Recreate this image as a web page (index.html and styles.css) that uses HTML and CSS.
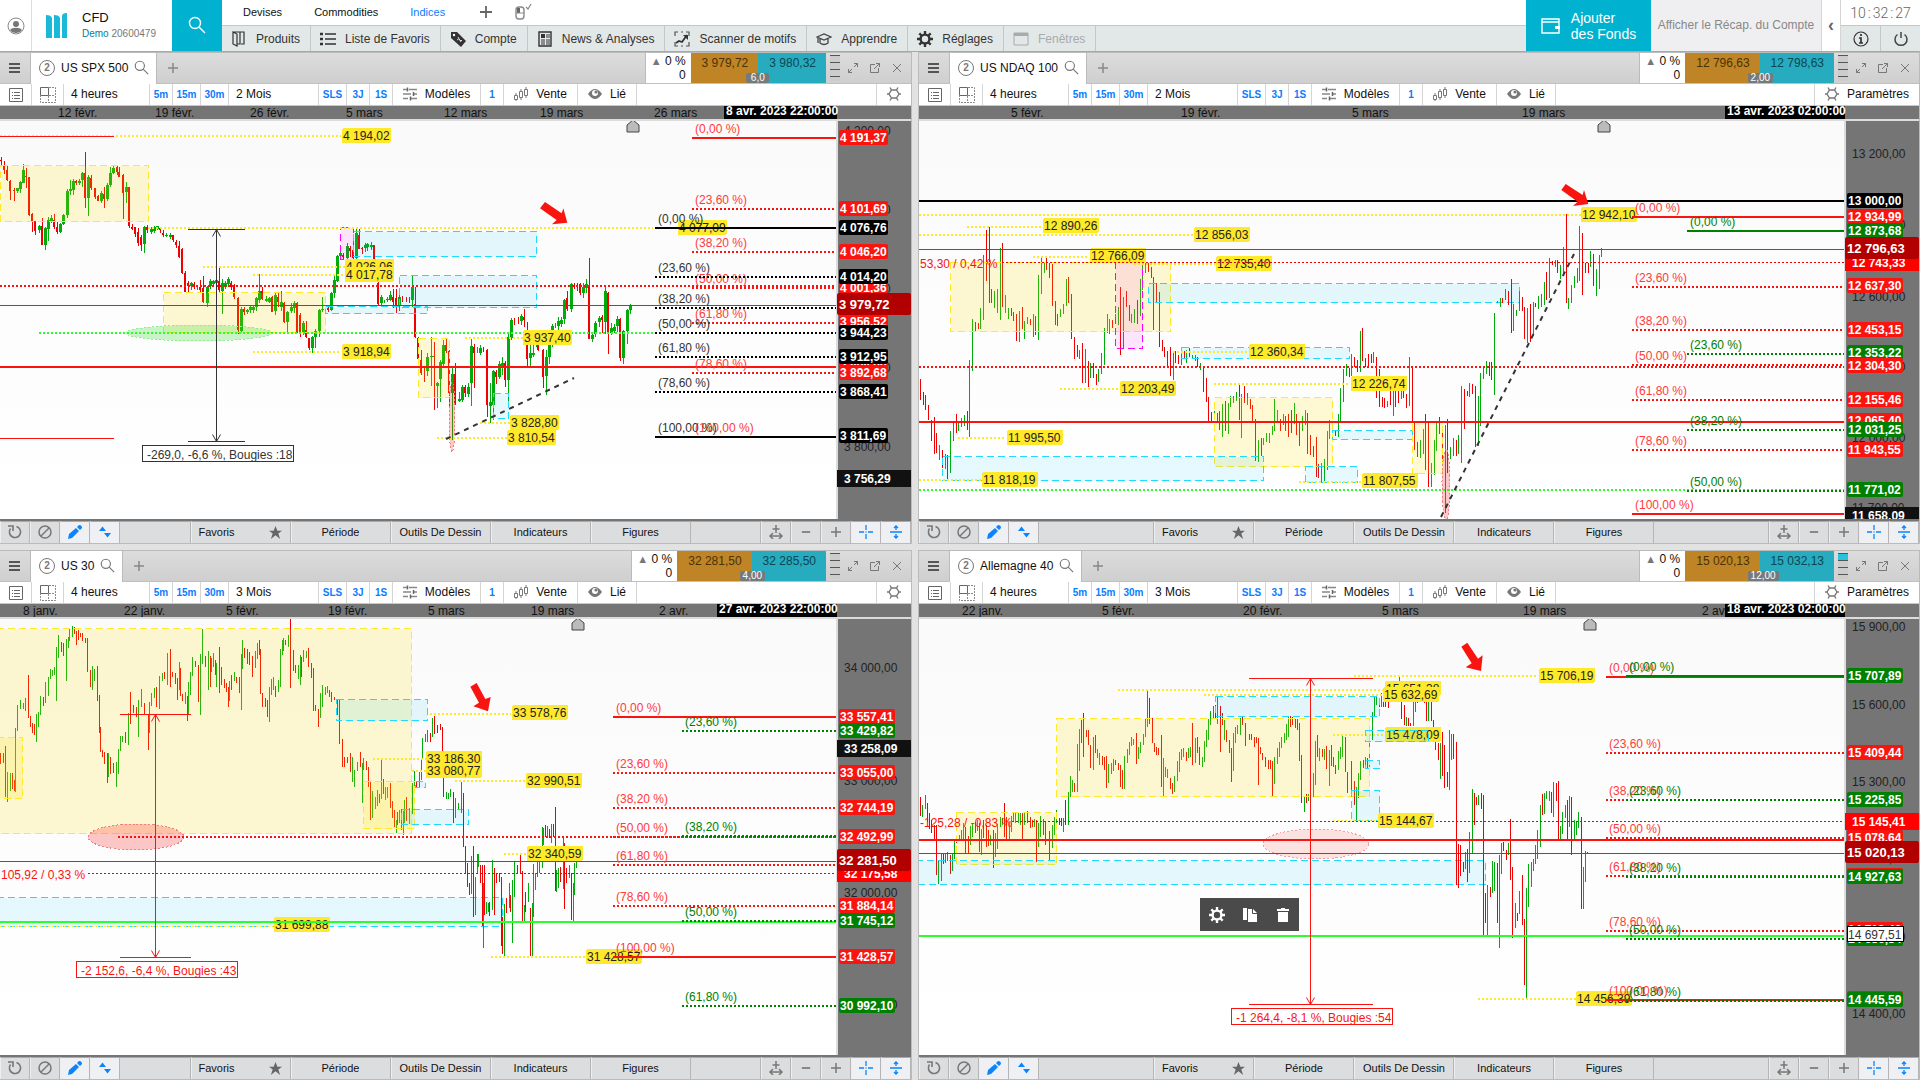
FILE: index.html
```html
<!DOCTYPE html>
<html lang="fr">
<head>
<meta charset="utf-8">
<title>CFD – Demo</title>
<link rel="stylesheet" href="styles.css">
</head>
<body>
<svg class="sprite" aria-hidden="true">
  <symbol id="i-user" viewBox="0 0 18 18"><circle cx="9" cy="9" r="8" fill="none" stroke="#8a8a8a"/><circle cx="9" cy="7" r="3" fill="#777"/><path d="M3 13c2-3 10-3 12 0-2 4-10 4-12 0z" fill="#777"/></symbol>
  <symbol id="i-logo" viewBox="0 0 22 26"><path d="M0 2q5 0 6 3v20H0zM8 2q5 0 6 3v20H8zM16 3q0-3 5-3v25h-5z" fill="#1ab9d8"/></symbol>
  <symbol id="i-search" viewBox="0 0 18 18"><circle cx="7" cy="7" r="5.5" fill="none" stroke="currentColor" stroke-width="1.4"/><path d="M11 11l6 6" stroke="currentColor" stroke-width="1.4"/></symbol>
  <symbol id="i-plus" viewBox="0 0 12 12"><path d="M6 0v12M0 6h12" stroke="currentColor" stroke-width="1.8"/></symbol>
  <symbol id="i-minus" viewBox="0 0 12 12"><path d="M1 6h10" stroke="currentColor" stroke-width="2"/></symbol>
  <symbol id="i-mouse" viewBox="0 0 18 18"><rect x="2" y="4" width="8" height="12" rx="3" fill="none" stroke="#888" stroke-width="1.4"/><path d="M3 5h3v5H3z" fill="#666"/><path d="M2 10h8" stroke="#888"/><path d="M12 4l2 2 3-5" fill="none" stroke="#888" stroke-width="1.2"/></symbol>
  <symbol id="i-products" viewBox="0 0 16 16"><path d="M2 1l4 2v12l-4-2zM2 1h7v12H6M9 1h4v12h-3" fill="none" stroke="#333" stroke-width="1.2"/></symbol>
  <symbol id="i-bullets" viewBox="0 0 16 14"><path d="M0 2h3M0 7h3M0 12h3" stroke="#333" stroke-width="2.6"/><path d="M5 2h11M5 7h11M5 12h11" stroke="#333" stroke-width="1.4"/></symbol>
  <symbol id="i-tag" viewBox="0 0 16 16"><path d="M1 1l6 0 9 9-5 6-10-9z" fill="#333"/><circle cx="4" cy="4" r="1.2" fill="#fff"/><path d="M8 6l3 5M7 9q2-2 3 0t2 0" stroke="#ddd" fill="none"/></symbol>
  <symbol id="i-news" viewBox="0 0 14 16"><path d="M1 1h12v14H1z" fill="none" stroke="#333" stroke-width="1.4"/><path d="M3 3h4v4H3z" fill="#333"/><path d="M8 4h4M8 6h4M3 9h4M8 9h4M3 11h4M8 11h4M3 13h4M8 13h4" stroke="#333"/></symbol>
  <symbol id="i-scan" viewBox="0 0 16 16"><path d="M1 5V1h3M12 1h3v4M15 11v4h-3M4 15H1v-4M7 1h2M7 15h2" fill="none" stroke="#555" stroke-width="1.2"/><path d="M2 12l3-2 3 1 5-7" fill="none" stroke="#333" stroke-width="1.8"/><path d="M9 4h5v5z" fill="#333"/></symbol>
  <symbol id="i-cap" viewBox="0 0 16 14"><path d="M1 5l7-3 7 3-7 3zM4 7v4q4 3 8 0V7M2 6v5" fill="none" stroke="#444" stroke-width="1.3"/></symbol>
  <symbol id="i-cog" viewBox="0 0 16 16"><circle cx="8" cy="8" r="4.4" fill="none" stroke="currentColor" stroke-width="2.4"/><path d="M8 0v3M8 13v3M0 8h3M13 8h3M2.300 2.300l2.200 2.200M11.500 11.500l2.200 2.200M13.700 2.300l-2.200 2.200M4.500 11.500l-2.200 2.200" stroke="currentColor" stroke-width="2.400"/></symbol>
  <symbol id="i-window" viewBox="0 0 16 14"><path d="M1 1h14v12H1z" fill="none" stroke="#aaa"/><path d="M1 1h14v3H1z" fill="#aaa"/></symbol>
  <symbol id="i-wallet" viewBox="0 0 20 16"><path d="M1 1h17v14H1zM1 4h17" fill="none" stroke="#fff" stroke-width="1.4"/><path d="M14 8h5v3h-5z" fill="#fff"/></symbol>
  <symbol id="i-info" viewBox="0 0 16 16"><circle cx="8" cy="8" r="7" fill="none" stroke="#333" stroke-width="1.2"/><path d="M8 3v2M6 7h2v5M6 12h4" fill="none" stroke="#333" stroke-width="1.7"/></symbol>
  <symbol id="i-power" viewBox="0 0 16 16"><path d="M4.500 3.500a6 6 0 1 0 7 0M8 1v6" fill="none" stroke="#444" stroke-width="1.5"/></symbol>
  <symbol id="i-menu" viewBox="0 0 12 12"><path d="M0 2h11M0 6h11M0 10h11" stroke="#555" stroke-width="2"/></symbol>
  <symbol id="i-list" viewBox="0 0 14 14"><path d="M.500.500h13v13H.500z" fill="none" stroke="#666"/><path d="M5 4.500h6M5 7.500h6M5 10.500h6M3 4.500h1M3 7.500h1M3 10.500h1" stroke="#666"/></symbol>
  <symbol id="i-grid" viewBox="0 0 16 16"><path d="M.500.500h8v8h-8z" fill="none" stroke="#666"/><path d="M9 .500h6.500v15H.500V9M8.500 9v6M9 8.500h6" fill="none" stroke="#888" stroke-dasharray="2 1"/></symbol>
  <symbol id="i-sliders" viewBox="0 0 14 14"><path d="M0 2.500h4M6 2.500h8M0 7h8M11 7h3M0 11.500h5M8 11.500h6" stroke="#888" stroke-width="1.300"/><path d="M4.500 .500v4M10.500 5v4M7.500 9.500v4" stroke="#666" stroke-width="1.500"/></symbol>
  <symbol id="i-candles" viewBox="0 0 14 14"><path d="M.500 8.500h3v4h-3zM5.500 4.500h3v6h-3zM10.500 2.500h3v6h-3zM2 6v2M2 13v1M7 2v2M7 11v2M12 0v2M12 9v2" fill="none" stroke="#777"/></symbol>
  <symbol id="i-eye" viewBox="0 0 14 12"><path d="M0 6q7-10 14 0-7 10-14 0z" fill="#777"/><circle cx="7" cy="5" r="3" fill="#fff"/><circle cx="8" cy="4" r="1.6" fill="#777"/></symbol>
  <symbol id="i-gear" viewBox="0 0 14 14"><path d="M4.500 3h5L12 7l-2.500 4h-5L2 7zM4.500 3L3 .500M9.500 3L11 .500M4.500 11L3 13.500M9.500 11l1.500 2.500M0 7h2M12 7h2" fill="none" stroke="#777" stroke-width="1.400"/></symbol>
  <symbol id="i-expand" viewBox="0 0 10 10"><path d="M6 .500h3.500V4M9.500.500L6 4M.500 6v3.500H4M.500 9.500L4 6" fill="none" stroke="#777"/></symbol>
  <symbol id="i-popout" viewBox="0 0 10 10"><path d="M5 1.500H.500v8h8V5M6 .500h3.500V4M9.500.500L4 6" fill="none" stroke="#777"/></symbol>
  <symbol id="i-close" viewBox="0 0 10 10"><path d="M1 1l8 8M9 1L1 9" stroke="#777"/></symbol>
  <symbol id="i-refresh" viewBox="0 0 14 14"><path d="M2.500 3.500a5.600 5.600 0 1 0 6-2M0 1h5v5" fill="none" stroke="#777" stroke-width="1.600"/></symbol>
  <symbol id="i-forbid" viewBox="0 0 14 14"><circle cx="7" cy="7" r="6" fill="none" stroke="#777" stroke-width="1.500"/><path d="M3 11l8-8" stroke="#777" stroke-width="1.500"/></symbol>
  <symbol id="i-pencil" viewBox="0 0 14 14"><path d="M0 14l1-5 7-6 3 3-7 7zM9 2l2-2q3 0 3 3l-2 2z" fill="#0a84ff"/></symbol>
  <symbol id="i-updown" viewBox="0 0 12 12"><path d="M0 5l3.500-4.500L7 5zM5 7h7l-3.500 4.500z" fill="#0a84ff"/></symbol>
  <symbol id="i-star" viewBox="0 0 14 14"><path d="M7 0l2 5h5l-4 3 2 6-5-4-5 4 2-6-4-3h5z" fill="#666"/></symbol>
  <symbol id="i-fit" viewBox="0 0 14 14"><path d="M7 0v8M3.500 4h7M1 11h12M4 8l-3 3 3 3M10 8l3 3-3 3" fill="none" stroke="#777" stroke-width="1.500"/></symbol>
  <symbol id="i-cross" viewBox="0 0 14 14"><path d="M7 0v5M7 9v5M0 7h5M9 7h5M6.500 7h1" stroke="#0a84ff" stroke-width="1.300"/></symbol>
  <symbol id="i-split" viewBox="0 0 14 14"><path d="M1 7h12M7 1v4M7 9v4M5 3l2-2 2 2M5 11l2 2 2-2" fill="none" stroke="#0a84ff" stroke-width="1.300"/></symbol>
  <symbol id="i-copy" viewBox="0 0 14 14"><path d="M0 0h4v12H0zM5 1h5l4 4v9H5z" fill="#fff"/><path d="M9.500 1v4.500H14" fill="none" stroke="#4a4a4a"/></symbol>
  <symbol id="i-trash" viewBox="0 0 12 14"><path d="M4 0h4v1h4v2H0V1h4zM1 4h10v10H1z" fill="#fff"/></symbol>
</svg>

<header class="top">
  <button class="top-user" aria-label="Profil"><svg width="18" height="18"><use href="#i-user"/></svg></button>
  <div class="account">
    <svg width="22" height="26"><use href="#i-logo"/></svg>
    <div><div class="account-type">CFD</div><div class="account-id"><b>Demo</b> 20600479</div></div>
  </div>
  <button class="top-search" aria-label="Rechercher"><svg width="18" height="18"><use href="#i-search"/></svg></button>
  <div class="top-main">
    <nav class="markets">
      <a href="#">Devises</a><a href="#">Commodities</a><a href="#" class="on">Indices</a>
      <button class="add" aria-label="Ajouter"><svg width="12" height="12"><use href="#i-plus"/></svg></button>
      <button class="mouse" aria-label="Souris"><svg width="18" height="18"><use href="#i-mouse"/></svg></button>
    </nav>
    <nav class="menu">
      <button><span><svg width="16" height="16"><use href="#i-products"/></svg></span>Produits</button>
      <button><span><svg width="16" height="14"><use href="#i-bullets"/></svg></span>Liste de Favoris</button>
      <button><span><svg width="16" height="16"><use href="#i-tag"/></svg></span>Compte</button>
      <button><span><svg width="14" height="16"><use href="#i-news"/></svg></span>News &amp; Analyses</button>
      <button><span><svg width="16" height="16"><use href="#i-scan"/></svg></span>Scanner de motifs</button>
      <button><span><svg width="16" height="14"><use href="#i-cap"/></svg></span>Apprendre</button>
      <button><span><svg width="16" height="16"><use href="#i-cog"/></svg></span>Réglages</button>
      <button disabled><span><svg width="16" height="14"><use href="#i-window"/></svg></span>Fenêtres</button>
    </nav>
  </div>
  <button class="funds"><svg width="20" height="16"><use href="#i-wallet"/></svg><span>Ajouter<br>des Fonds</span></button>
  <button class="recap">Afficher le Récap. du Compte</button>
  <button class="fold" aria-label="Replier">‹</button>
  <div class="side">
    <div class="clock"><span>10</span><span>:</span><span>32</span><span>:</span><span>27</span></div>
    <div class="side-row">
      <button aria-label="Informations"><svg width="16" height="16"><use href="#i-info"/></svg></button>
      <button aria-label="Quitter"><svg width="16" height="16"><use href="#i-power"/></svg></button>
    </div>
  </div>
</header>
<main class="panels" id="panels"></main>
<script src="chart.js"></script>
</body>
</html>
```
FILE: styles.css
```css
* { box-sizing: border-box; }
html, body { height: 100%; }
body {
  margin: 0;
  display: flex;
  flex-direction: column;
  background: #e2e2e2;
  color: #111;
  font: 12px/16px "Liberation Sans", Arial, sans-serif;
  overflow: hidden;
}
button {
  margin: 0;
  padding: 0;
  border: 0;
  background: none;
  color: inherit;
  font: inherit;
  display: flex;
  align-items: center;
  justify-content: center;
  white-space: nowrap;
}
svg { display: block; flex: none; }
.sprite { position: absolute; width: 0; height: 0; }

/* top bar */
.top { display: flex; height: 52px; flex: none; background: #fff; border-bottom: 1px solid #a3a7bb; }
.top-user { width: 32px; border-right: 1px solid #ddd; }
.account { width: 140px; display: flex; align-items: center; gap: 14px; padding-left: 14px; }
.account-type { font-size: 13px; }
.account-id { font-size: 10px; color: #777; }
.account-id b { font-weight: normal; color: #067c93; }
.top-search { width: 50px; padding-bottom: 2px; background: #00b2cf; color: #fff; }
.top-main { flex: 1; min-width: 0; display: flex; flex-direction: column; }
.markets { height: 25px; display: flex; align-items: center; padding: 0 0 2px 5px; font-size: 11px; }
.markets a { padding: 0 16px; color: #111; text-decoration: none; }
.markets a.on { color: #0a7cff; }
.add { width: 50px; color: #666; }
.mouse { width: 24px; }
.menu { flex: 1; display: flex; background: #e2e8e8; border-top: 1px solid #c2c8c8; }
.menu button { padding-right: 10px; border-right: 1px solid #c2c8c8; color: #333; }
.menu button:disabled { color: #aaa; }
.menu span { width: 34px; display: flex; justify-content: center; }
.funds { width: 125px; gap: 10px; background: #00b2cf; color: #fff; font-size: 14px; text-align: left; }
.recap { width: 171px; padding-bottom: 2px; background: #efeff1; color: #888; border-right: 1px solid #d5d5d5; }
.fold { width: 18px; padding-bottom: 2px; font-size: 18px; font-weight: bold; color: #666; }
.side { width: 80px; display: flex; flex-direction: column; border-left: 1px solid #d5d5d5; }
.clock { height: 25px; display: flex; align-items: center; justify-content: center; gap: 2px; color: #666; font: 300 14px/16px Roboto, sans-serif; }
.side-row { flex: 1; display: flex; border-top: 1px solid #c2c8c8; background: #e2e8e8; }
.side-row button { flex: 1; }
.side-row button + button { border-left: 1px solid #c2c8c8; }

/* chart windows */
.panels {
  flex: 1;
  min-height: 0;
  display: grid;
  grid-template-columns: 912fr 1002fr;
  grid-template-rows: minmax(0, 492fr) minmax(0, 530fr);
  gap: 6px;
}
.panel { min-width: 0; min-height: 0; display: flex; flex-direction: column; border: 1px solid #bbb; }
.panel:nth-child(odd) { border-left: 0; }

.tabs { height: 31px; flex: none; display: flex; background: linear-gradient(#dcdcdc, #cfcfcf); border-bottom: 1px solid #c0c0c0; }
.tabs-menu { width: 31px; border-right: 1px solid #bbb; }
.tab { height: 31px; display: flex; align-items: center; gap: 6px; padding: 0 7px 2px 8px; background: #fff; border-right: 1px solid #bbb; color: #777; }
.tab strong { color: #111; font-weight: normal; }
.tab i { width: 16px; height: 16px; border: 1px solid #777; border-radius: 8px; font: bold 10px/14px "Liberation Sans", sans-serif; text-align: center; }
.tab-add { width: 32px; color: #888; }
.move { margin-left: auto; width: 46px; padding: 1px 5px 0 0; background: #fff; border-left: 1px solid #bbb; text-align: right; line-height: 14px; }
.move b { color: #777; font-weight: normal; font-size: 11px; }
.quote { display: flex; position: relative; }
.quote button { padding: 0 10px 0 11px; align-items: flex-start; line-height: 21px; }
.quote .sell { background: #bf8425; color: #4a3208; }
.quote .buy { background: #27abbf; color: #0d4650; }
.spread { position: absolute; left: 50%; bottom: 0; min-width: 23px; margin-left: -12px; padding: 0 3px; background: #757a7c; color: #fff; font-size: 10px; line-height: 10px; text-align: center; border-radius: 2px; }
.depth { width: 10px; margin: 2px 2px 2px 4px; background: repeating-linear-gradient(#555 0 1px, #ccc 1px 7px); }
.depth.hot { background: linear-gradient(#27c3dd, #27c3dd) 0 1px / 10px 6px no-repeat, repeating-linear-gradient(#555 0 1px, #ccc 1px 7px); }
.win { width: 22px; }
.win:last-child { margin-right: 3px; }

.tools { height: 22px; flex: none; display: flex; background: #fff; border-bottom: 1px solid #c8c8c8; }
.tools button { border-right: 1px solid #d5d5d5; gap: 8px; padding-bottom: 2px; }
.tools .icon { width: 32px; padding-bottom: 0; }
.tools .period { width: 86px; justify-content: flex-start; padding-left: 7px; }
.tools .span { width: 90px; justify-content: flex-start; padding-left: 7px; }
.tools .quick { width: 23px; color: #0a7cff; font-size: 10px; font-weight: bold; padding-bottom: 0; }
.tools .wide { width: 28px; }
.tools .model { width: 88px; }
.tools .side-btn { width: 74px; }
.tools .link { width: 59px; }
.tools .prefs { margin-left: auto; padding: 0 10px 2px; border-left: 1px solid #d5d5d5; border-right: 0; }

.times { width: 100%; height: 13px; flex: none; background: #757575; }
.chart { flex: 1; min-height: 0; display: flex; position: relative; border-top: 2px solid #dcdcdc; }
.plot { flex: 1; min-width: 0; height: 100%; background: linear-gradient(#fafafa, #fff); }
.axis { width: 75px; height: 100%; background: #757575; }
svg text { font: 12px "Liberation Sans", Arial, sans-serif; white-space: pre; }
svg text.strong { font-weight: bold; }
svg text.now { font-size: 13px; font-weight: bold; }

.float { position: absolute; left: 281px; top: 279px; width: 99px; height: 33px; display: flex; background: #4a4a4a; color: #fff; }
.float button { flex: 1; }

.foot { height: 24px; flex: none; display: flex; background: #dcddde; border-top: 2px solid #757575; font-size: 11px; }
.foot button { width: 100px; padding-bottom: 1px; border-right: 1px solid #b5b5b5; border-left: 1px solid #eee; border-top: 1px solid #aaa; }
.foot .mini { width: 30px; color: #777; }
.foot .on { background: #eef0f3; }
.foot .gap { flex: 1; border-top: 1px solid #aaa; border-right: 1px solid #b5b5b5; }
.foot .fav { justify-content: space-between; padding: 0 8px 1px 7px; }
```
FILE: chart.js
```js
// Chart windows. Geometry is stored in thirds of a pixel; "x0" is the pixel offset of each block of drawings.
const RED = '#fa1410', GREEN = '#008000', BLACK = '#000', YEL = '#ffe92b', LIME = '#2bff2b', CUR = '#b20000';
const U = 3;

const charts = [
  {
    name: 'US SPX 500', span: '2 Mois', sell: '3 979,72', buy: '3 980,32', spread: '6,0', dy: -1, prefs: '',
    times: [[58, '12 févr.'], [155, '19 févr.'], [250, '26 févr.'], [346, '5 mars'], [444, '12 mars'], [540, '19 mars'], [654, '26 mars']],
    stamp: [724, 113, '8 avr. 2023 22:00:00'],
    blocks: [
      {
        x0: 0,
        bars: 'r4,112,135,120,124 r13,124,162,135,150 r21,135,182,150,180 r30,180,240,183,213 r43,205,242,211,215 g52,203,220,205,215 g61,183,218,187,208 g70,133,190,150,188 r79,143,204,168,172 r88,170,288,170,285 r97,278,335,282,304 r106,302,345,304,335 g119,315,338,318,330 r128,293,376,318,375 g137,320,390,324,374 g146,292,362,300,326 g155,285,310,295,303 r163,281,326,300,320 r173,305,342,320,336 g182,310,340,312,336 g191,283,315,284,312 g202,207,294,213,286 g211,180,225,207,213 g220,178,225,183,210 r229,180,196,184,190 g238,178,196,182,188 g247,156,200,160,182 r256,96,265,160,236 g265,165,288,172,236 r274,166,210,175,205 r285,203,236,205,232 r295,224,244,228,242 g304,214,250,220,243 r313,200,264,222,238 g322,190,242,195,238 g331,140,200,158,194 g340,137,162,144,158 r352,138,165,142,156 r358,140,172,155,170 r370,162,297,165,218 g379,185,250,200,216 r387,200,325,202,320 r396,312,330,320,325 r405,322,350,322,344 r414,324,378,336,370 r424,345,392,350,374 g433,318,398,322,374 r443,314,340,322,330 g455,320,342,326,336 g463,318,340,320,332 g473,317,330,318,326 r481,320,340,324,330 r491,330,350,340,346 g500,340,352,346,348 g510,340,358,345,350 r519,344,365,346,362 r528,360,384,366,376 r538,362,415,378,410 r547,384,462,388,460 r556,454,517,458,515 r566,484,515,490,500 g575,485,510,490,500 r584,486,506,492,500 g592,500,510 r602,480,520,500,510 r611,468,550,505,548 g622,497,562,500,548 g631,478,508,483,498 g641,480,494,482,490 g650,477,490,480,488 r659,444,515,484,512 g668,478,582,490,514 g677,484,506,488,500 g686,472,497,476,490 r695,482,510,488,500 r704,492,536,497,530 r715,530,642,535,630 g724,560,635,566,632 r733,560,585,568,578 g742,566,583,570,576 g751,558,578,562,572 g760,556,580,560,570 g769,530,572,534,562 g778,463,548,512,538 r788,500,540,512,535 g799,528,546,538,544 g808,530,548,534,545 r817,528,576,530,574 g826,520,586,525,574 r835,515,560,530,545 g844,514,572,545,560 r853,546,608,550,606 g862,572,640,575,606 g873,550,580,560,572 g882,542,578,548,562 r891,545,640,548,636 r901,580,650,585,638 g910,603,646,610,640 r919,602,655,630,650 r928,654,690,655,686 g937,648,700,652,685 g947,627,685,632,650 g958,567,650,570,632 g967,532,575,566,570 g976,560,576 r985,560,575,565,572 g995,516,574,520,572 g1003,468,535,480,520 g1012,405,485,408,482 g1021,392,415,398,408 r1030,400,416,404,410 g1042,370,420,378,414 r1051,378,412,385,395 r1060,360,425,390,415 g1069,326,420,338,412 r1078,328,388,345,386 r1088,380,402,384,388 g1097,368,395,374,384 g1103,368,392,372,380 g1113,365,390,374,380 r1124,375,470,376,468 r1134,480,555,488,550 g1145,525,555,532,550 g1153,540,550 g1163,530,545,538,542 g1172,514,542,525,540 r1181,508,565,530,545 r1189,508,580,535,558 g1198,525,574,530,555 r1207,528,545 r1218,530,545 r1227,532,548 g1238,468,560,500,540 r1246,500,655,552,652 r1255,650,720,655,718 r1263,690,765,720,758 r1274,742,785 g1283,700,768,712,755 g1294,652,798,708,712 r1303,665,870,708,710 g1312,786,864,790,798 g1321,720,845,726,778 g1330,660,740,675,732 r1340,654,700,675,694 r1348,690,860,694,820 g1358,745,960,762,820 r1366,730,855,762,850 g1377,815,845,838,845',
        boxes: [['y', 0, 136, 443, 304], ['y', 490, 517, 977, 637], ['y', 1255, 655, 1349, 832], ['p', 1021, 322, 1061, 418], ['c', 1061, 334, 1610, 409], ['c', 1198, 466, 1610, 562], ['c', 977, 559, 1282, 580]],
        ovals: [['g', 598, 640, 219, 23], ['r', 1355, 890, 10, 105]],
        lines: [[0, 1023, 48, YEL, 2, 1], [443, 1960, 324, YEL, 2, 1], [610, 1035, 440, YEL, 2, 1], [760, 1030, 465, YEL, 2, 1], [760, 1023, 695, YEL, 2, 1], [1310, 1522, 955, YEL, 2, 1], [0, 342, 49, RED, 1], [0, 342, 955, RED, 1], [0, 2508, 498, RED, 2, 1], [0, 2508, 556, RED, 1], [117, 1960, 639, LIME, 2, 1], [0, 2508, 741, RED, 2]],
        labels: [[1026, 44, '4 194,02'], [1035, 437, '4 026,06'], [1035, 462, '4 017,78'], [1026, 692, '3 918,94']],
        measure: [649, 328, 964, 564, 735, 427, 881, '-269,0, -6,6 %, Bougies :18', '#333'],
        trend: [1338, 958, 1722, 773]
      },
      {
        x0: 460,
        bars: 'g7,796,845,800,838 r16,796,830,802,820 g26,790,832,800,820 g35,658,858,678,788 r44,672,805,680,698 g53,682,698 g61,676,706,684,698 r70,682,695 r81,688,890,690,856 g91,790,908,846,858 g100,750,900,754,855 r109,750,792,756,772 g118,724,776,732,770 g127,712,765,730,742 r136,724,802,730,780 g146,642,858,652,780 g155,594,660,600,654 r164,594,615 r175,592,612 g184,582,616,588,602 r194,568,620,590,600 r202,606,738,650,716 g211,670,738,700,716 g220,670,712,698,704 g229,665,680 r236,662,692,668,690 r249,688,804,690,770 g259,690,825,710,768 g268,640,732,652,712 g277,612,680,618,650 g286,610,625 g295,592,632,604,618 g304,592,620,600,612 g313,536,612,540,598 r322,514,572,534,568 g334,488,575,492,568 r343,488,506 r352,490,512 r361,490,526,492,520 g370,490,533,502,520 g379,477,520,492,504 r388,414,658,500,656 g397,640,665,644,656 g406,604,650,610,642 g418,588,620,594,606 r427,584,640,590,600 g436,500,642,512,606 r445,515,702,520,636 g455,610,645,624,638 g463,612,640,620,632 g473,588,636,598,620 r481,595,722,598,716 g490,630,732,634,716 g502,566,672,570,634 g511,552,582,556,570',
        boxes: [['c', 100, 821, 146, 896]],
        lines: [[15, 190, 654, YEL, 2, 1], [60, 150, 909, YEL, 2, 1]],
        labels: [[655, 320, '4 077,09'], [190, 650, '3 937,40'], [150, 905, '3 828,80'], [142, 950, '3 810,54']],
        fibs: [[696, RED, [[54, '0,00', 1], [267, '23,60'], [396, '38,20'], [503, '50,00'], [609, '61,80'], [759, '78,60'], [951, '100,00', 1]]], [585, BLACK, [[324, '0,00', 1], [471, '23,60'], [564, '38,20'], [639, '50,00'], [711, '61,80'], [816, '78,60'], [951, '100,00', 1]]]],
        edge: 1128, home: [520, 0],
        arrow: '240,265 255,246 305,280 310,265 322,308 276,313 290,300'
      }
    ],
    ticks: [[30, '4 200,00'], [267, '4 100,00'], [505, '4 000,00'], [740, '3 900,00'], [977, '3 800,00']],
    tags: [[50, '4 191,37', RED], [263, '4 101,69', RED], [320, '4 076,76', BLACK], [392, '4 046,20', RED], [502, '4 001,36', RED], [467, '4 014,20', BLACK], [604, '3 956,52', RED], [635, '3 944,23', BLACK], [735, '3 898,00', RED], [707, '3 912,95', BLACK], [756, '3 892,68', RED], [812, '3 868,41', BLACK], [946, '3 811,69', BLACK], [1074, '3 756,29', '#111', 'wide'], [552, '3 979,72', CUR, 'now']]
  },
  {
    name: 'US NDAQ 100', span: '2 Mois', sell: '12 796,63', buy: '12 798,63', spread: '2,00', dy: -1, prefs: 'Paramètres',
    times: [[92, '5 févr.'], [262, '19 févr.'], [433, '5 mars'], [603, '19 mars']],
    stamp: [806, 120, '13 avr. 2023 02:00:00'],
    blocks: [
      {
        x0: -4,
        bars: 'r16,778,840 r25,815,855 r31,825,870 r40,855,900 r50,900,962 r58,890,1002 r64,940,1000 g73,975,1020 r82,990,1045 g91,1002,1048 r97,1005,1078 g106,932,1058 g115,905,962 r124,882,938 g130,905,932 g139,895,922 g148,885,918 r157,872,930 g163,720,950 g172,598,752 r181,605,632 r190,608,628 g196,565,628 g205,405,600 r214,330,484 r223,320,550 r229,507,548 g238,512,564 g247,508,578 g256,384,600 r262,370,560 g271,525,578 g280,564,598 r289,564,588 r295,575,602 r304,582,662 g313,573,665 r322,562,628 g328,603,656 g337,590,612 r346,597,615 g355,582,650 r361,588,645 g370,464,660 g379,412,522 g388,430,460 r394,414,450 r403,428,474 r412,432,558 r421,543,614 r427,582,617 g436,567,590 g445,552,582 g454,478,558 r460,470,548 r469,522,656 r478,650,718 r487,675,712 g493,690,718 r502,670,790 g511,686,790 r520,722,802 g526,730,775 r535,728,775 r544,762,795 g550,748,786 g559,698,762 g568,625,735 g577,582,640 g583,598,642 r592,600,625 g601,582,612 g610,560,615 r616,500,704 g625,532,686 r634,512,562 r643,555,602 g649,582,608 g658,568,610 r667,540,612 g676,478,588 g682,432,510 g691,428,460 r700,428,455 r709,442,474 r715,470,630 r724,490,546 r733,515,682 r742,660,692 r748,682,710 r757,692,742 r766,682,768 g775,695,780 r781,692,728 r790,706,732 g799,692,735 r808,692,714 g814,690,728 r823,684,712 g832,706,718 g841,704,724 r847,710,742 g856,728,750 r865,740,815 r874,774,846 r880,832,902 r889,876,904 g898,874,892 r907,880,902 r913,873,930 g922,852,950 r931,843,934 g940,848,942 g946,828,860 g955,828,850 g964,815,842 r973,796,900 g979,822,954 r988,798,850 g997,820,856 r1006,838,866 r1012,856,910 r1021,896,1022 g1030,960,1025 r1039,955,1008 g1045,954,976 g1054,940,966 g1063,938,968 g1072,918,946 g1078,838,932 g1087,870,908 r1096,898,934 g1105,882,916 r1111,888,934 r1120,882,952 r1129,870,938 g1138,850,912 r1144,882,946 r1153,905,978 g1162,888,932 g1171,870,914 r1177,880,1002 r1186,946,1005 r1194,978,1012 r1203,950,1072 r1211,1033,1075 g1219,1030,1088 g1228,1016,1086 g1237,934,1050 g1243,900,958 r1261,934,948 g1270,882,950 g1276,804,910 g1285,746,846 g1294,732,768 r1303,745,770 g1309,702,768 r1318,710,740 r1327,720,755 g1336,632,756 r1342,624,724 r1351,714,742 r1360,702,740 r1369,702,728 g1375,696,728 r1384,710,834 r1393,748,860 r1402,830,860 r1408,835,864 g1417,842,862 r1426,810,856 g1435,810,888 r1441,810,862 r1450,810,850 g1459,800,838 r1465,810,835 r1474,822,864 g1483,710,858 r1493,740,905',
        boxes: [['y', 106, 428, 767, 634], ['p', 601, 428, 683, 685], ['c', 700, 490, 1813, 547], ['c', 799, 682, 1303, 715], ['y', 898, 832, 1252, 1040], ['c', 82, 1010, 1045, 1081], ['c', 1252, 932, 1492, 958], ['c', 1171, 1040, 1328, 1087]],
        lines: [[12, 2787, 243, BLACK, 2], [12, 1998, 285, YEL, 2, 1], [155, 380, 321, YEL, 2, 1], [12, 835, 345, YEL, 2, 1], [354, 517, 411, YEL, 2, 1], [658, 900, 432, YEL, 2, 1], [775, 1000, 696, YEL, 2, 1], [435, 610, 807, YEL, 2, 1], [898, 1300, 792, YEL, 2, 1], [130, 268, 954, YEL, 2, 1], [12, 200, 1080, YEL, 2, 1], [1153, 1340, 1086, YEL, 2, 1], [12, 2787, 388, RED, 1], [262, 2787, 428, '#e00', 1, 1], [12, 2787, 741, RED, 2, 1], [12, 2787, 906, RED, 2], [12, 2787, 1110, LIME, 2, 1]],
        labels: [[384, 316, '12 890,26'], [838, 341, '12 856,03'], [526, 406, '12 766,09'], [904, 428, '12 735,40'], [1003, 692, '12 360,34'], [615, 803, '12 203,49'], [1309, 788, '12 226,74'], [276, 950, '11 995,50'], [201, 1076, '11 818,19'], [1341, 1081, '11 807,55']],
        note: [14, 444, '53,30 / 0,42 %']
      },
      {
        x0: 481,
        bars: 'r43,905,990 r52,965,1010 g61,960,1015 g70,928,1002 r76,882,1050 r85,910,1100 g94,1028,1100 g103,960,1066 g109,910,992 r118,890,942 r127,922,1030 g136,914,1180 r142,898,1060 g151,980,1018 g160,955,1008 r169,960,1008 g175,945,1003 g184,798,1028 r193,806,928 r202,812,828 g208,788,832 r217,792,822 r226,798,980 g235,828,978 g241,758,918 g250,740,776 g259,724,762 r268,725,768 r274,726,780 g283,580,825 g292,542,548 g301,535,560 r307,535,550 g316,507,540 r325,512,555 r334,478,638 g340,552,632 g349,570,588 g358,514,574 r367,530,574 r373,562,658 g382,565,670 r391,552,666 g400,546,645 r406,548,562 g415,528,566 g424,522,560 g433,486,556 r439,456,540 g448,414,535 r457,422,434 g466,420,440 r472,420,458 g481,436,476 g490,382,460 r499,282,548 g505,534,568 g514,495,550 g523,468,505 g532,444,488 g538,318,482 r547,338,525 r556,430,458 r565,428,458 g571,394,440 r580,402,498 g589,448,528 g598,406,506 g604,384,412',
        boxes: [['y', 38, 908, 127, 1060]],
        ovals: [['r', 138, 1095, 13, 108]],
        labels: [[543, 281, '12 942,10']],
        fibs: [[696, RED, [[291, '0,00', 1], [501, '23,60'], [630, '38,20'], [736, '50,00'], [840, '61,80'], [990, '78,60'], [1182, '100,00', 1]]], [861, GREEN, [[333, '0,00', 1], [702, '23,60'], [930, '38,20'], [1113, '50,00']]]],
        edge: 1332, home: [613, 0], trend: [123, 1190, 523, 402],
        arrow: '484,210 497,192 548,225 552,210 565,252 519,258 533,245'
      }
    ],
    ticks: [[100, '13 200,00'], [313, '12 900,00'], [527, '12 600,00'], [737, '12 300,00'], [950, '12 000,00'], [1160, '11 700,00']],
    tags: [[239, '13 000,00', BLACK], [287, '12 934,99', RED], [330, '12 873,68', GREEN], [427, '12 743,33', '#f00', 'wide'], [496, '12 637,30', RED], [627, '12 453,15', RED], [697, '12 353,22', GREEN], [734, '12 304,30', RED], [836, '12 155,46', RED], [901, '12 065,40', RED], [927, '12 031,25', GREEN], [987, '11 943,55', RED], [1108, '11 771,02', GREEN], [1185, '11 658,09', '#111', 'wide'], [384, '12 796,63', CUR, 'now']]
  },
  {
    name: 'US 30', span: '3 Mois', sell: '32 281,50', buy: '32 285,50', spread: '4,00', dy: -29, prefs: '',
    times: [[23, '8 janv.'], [124, '22 janv.'], [226, '5 févr.'], [328, '19 févr.'], [428, '5 mars'], [531, '19 mars'], [659, '2 avr.']],
    stamp: [717, 120, '27 avr. 2023 22:00:00'],
    blocks: [
      {
        x0: 0,
        bars: 'r1,488,522 r10,490,520 r16,468,622 g22,545,635 g31,550,602 r37,548,596 r43,570,602 g46,415,606 g52,345,424 g61,330,358 g70,340,358 g76,325,362 r85,255,384 r91,378,412 r97,400,430 r103,402,436 g109,372,455 g115,365,412 g121,318,375 r130,322,348 g136,275,340 g145,262,318 g151,238,268 g157,240,258 g163,232,256 g169,170,333 g175,135,204 r184,156,186 r190,160,198 g199,148,272 g205,142,174 g208,118,154 g217,108,140 r223,112,132 r229,122,166 r235,120,150 r241,130,142 r247,130,152 r256,145,160 r262,144,245 r271,240,292 g277,228,300 g283,238,272 r292,228,332 r298,315,430 r301,410,486 r307,480,500 r313,485,522 r322,490,580 g325,488,560 r331,500,552 r340,518,550 g349,515,592 g355,476,552 g361,438,482 g367,438,455 r376,425,460 g385,370,465 r391,305,402 r400,345,370 r409,350,382 g415,330,442 g424,298,352 r433,338,374 r445,372,480 g448,335,428 g454,310,348 g463,295,325 r469,290,350 g478,258,358 g487,248,274 r493,245,266 g502,190,285 r511,178,290 r517,245,262 r526,250,282 r532,265,330 g538,216,300 r541,235,318 r547,312,332 g556,305,342 r562,318,392 g565,275,372 g571,245,315 g577,200,258 r586,212,230 r595,225,336 g601,192,376 g607,118,222 r616,198,232 g625,182,300 r631,198,292 g634,205,246 g640,190,230 r646,210,256 g649,218,290 r658,170,308 r664,232,284 r673,268,294 r679,280,305 r685,290,350 g688,272,332 r694,255,300 g703,245,272 r709,260,278 r718,262,308 g724,192,360 g727,150,238 r733,175,205 r742,178,222 r748,185,226 r757,198,262 g766,184,234 g772,160,208 r778,150,195 r781,178,312 r787,308,350 r796,325,352 r802,330,380 g808,290,396 g814,268,316 g820,262,300 r826,288,320 g835,270,306 g841,178,292 g847,150,195 g850,145,182 r856,150,166 g865,135,170 r871,84,294 r880,180,242 r886,225,250 g895,225,266 g901,195,285 r904,200,262 g910,180,215 g919,182,205 r925,175,230 r934,218,264 r940,235,362 r946,345,364 r955,358,410 g961,310,385 g967,286,350 g976,292,314 g982,288,310 r988,300,320 r994,306,336 r1003,320,330 r1012,326,375 r1018,330,462 r1027,446,530 r1033,500,530 r1042,500,520 r1050,490,546 g1057,500,576 g1063,540,592 g1072,515,542 r1081,485,532 g1087,520,640 g1090,505,540 r1099,512,540 r1105,530,592 r1111,575,690 g1117,602,684 g1126,622,656 g1132,600,648 r1138,612,640 g1144,508,626 r1150,568,612 g1156,590,630 g1162,592,625 r1171,578,655 r1177,632,685 r1183,660,710 g1189,690,728 r1192,665,704 g1198,660,700 r1204,656,720 g1210,662,735 g1213,630,700 r1219,622,692 g1228,655,702 g1237,578,672 g1243,542,600 r1249,575,592 g1258,545,590 g1264,505,570 g1267,445,510 g1276,432,455 g1282,420,455 r1291,430,455 g1297,385,440 r1303,378,432 r1312,405,430 r1320,402,420 r1327,410,562 r1330,560,622 g1339,605,628 g1345,608,626 g1351,598,620 r1360,605,700 g1366,625,685 g1375,640,660',
        boxes: [['y', -10, 116, 1235, 730], ['y', -10, 442, 68, 625], ['y', 1090, 574, 1243, 716], ['c', 1010, 328, 1283, 391], ['c', 1247, 574, 1277, 592], ['c', 1204, 658, 1406, 703], ['c', -10, 922, 1507, 1010]],
        ovals: [['r', 409, 740, 144, 38]],
        lines: [[1290, 1533, 371, YEL, 2, 1], [1120, 1278, 507, YEL, 2, 1], [1235, 1278, 543, YEL, 2, 1], [1365, 1578, 573, YEL, 2, 1], [0, 820, 1008, YEL, 1, 1], [354, 2508, 741, RED, 2, 1], [0, 2508, 814, RED, 1], [264, 2508, 851, '#e00', 1, 1], [0, 2508, 996, LIME, 2]],
        labels: [[1278, 503, '33 186,30'], [1278, 539, '33 080,77'], [822, 1003, '31 699,88']],
        note: [2, 867, '105,92 / 0,33 %'],
        measure: [466, 373, 1103, 360, 573, 229, 713, '-2 152,6, -6,4 %, Bougies :43', RED]
      },
      {
        x0: 460,
        bars: 'g4,575,670 r10,608,770 r16,768,850 r22,820,892 r28,880,915 g34,798,912 r40,768,980 g46,860,975 g52,792,850 g55,792,830 r61,826,880 r67,824,1008 g70,880,1074 r73,825,975 g79,935,972 g85,940,965 r88,935,978 g97,810,960 r103,835,975 r109,848,878 r118,850,875 r124,862,1068 r127,980,1092 g133,942,1098 r139,925,970 g148,880,955 r151,915,965 g157,870,1058 g163,815,920 r172,825,852 r181,795,850 r187,842,995 g193,945,1000 r196,905,965 g205,880,935 r211,955,1098 g217,940,1098 g220,822,980 g226,850,900 g232,810,860 g238,770,850 g247,710,835 g250,715,765 r256,706,742 g262,708,740 r268,718,745 g274,702,758 r280,702,740 r286,650,902 g289,840,905 g295,835,895 r301,830,875 g310,738,898 r313,760,956 r319,835,880 g328,825,865 r334,848,990 g340,880,994 g343,820,915 g349,812,835',
        lines: [[132, 202, 792, YEL, 2, 1], [93, 378, 1101, YEL, 2, 1]],
        labels: [[157, 367, '33 578,76'], [199, 569, '32 990,51'], [202, 788, '32 340,59'], [378, 1097, '31 428,57']],
        fibs: [[459, RED, [[381, '0,00', 1], [549, '23,60'], [654, '38,20'], [741, '50,00'], [825, '61,80'], [948, '78,60'], [1101, '100,00', 1]]], [666, GREEN, [[423, '23,60'], [738, '38,20'], [993, '50,00'], [1248, '61,80']]]],
        edge: 1128, home: [355, 84],
        arrow: '31,290 50,279 76,327 92,321 84,364 40,349 57,338'
      }
    ],
    ticks: [[230, '34 000,00'], [570, '33 000,00'], [905, '32 000,00'], [1243, '31 000,00']],
    tags: [[377, '33 557,41', RED], [420, '33 429,82', GREEN], [474, '33 258,09', '#111', 'wide'], [545, '33 055,00', RED], [650, '32 744,19', RED], [737, '32 492,99', RED], [848, '32 175,58', '#f00', 'wide'], [944, '31 884,14', RED], [990, '31 745,12', GREEN], [1097, '31 428,57', RED], [1244, '30 992,10', GREEN], [810, '32 281,50', CUR, 'now']]
  },
  {
    name: 'Allemagne 40', span: '3 Mois', sell: '15 020,13', buy: '15 032,13', spread: '12,00', dy: -29, prefs: 'Paramètres', float: true,
    times: [[43, '22 janv.'], [183, '5 févr.'], [324, '20 févr.'], [463, '5 mars'], [604, '19 mars'], [783, '2 avr.']],
    stamp: [806, 120, '18 avr. 2023 02:00:00'],
    blocks: [
      {
        x0: -4,
        bars: 'r16,622,678 g22,645,682 g31,615,656 r37,640,695 r43,668,718 r50,690,728 r58,705,752 r64,705,855 g70,810,882 g79,790,872 r85,790,822 g91,792,820 g97,785,812 r106,795,852 g112,790,842 g118,748,808 r124,740,760 g133,735,750 g139,720,750 g145,700,748 r151,712,790 r160,738,790 g166,708,765 g172,702,740 r181,695,730 g187,690,722 r193,700,785 g199,718,795 r205,690,745 r214,705,772 r220,720,768 g226,735,765 r235,720,834 g241,730,800 g247,702,778 g256,682,712 g262,685,704 r268,638,740 r274,680,752 g283,695,752 g289,678,725 g295,670,695 g301,670,700 g310,665,698 g316,668,704 r322,670,748 g328,668,706 r337,664,700 r346,680,715 r352,690,710 g358,688,712 r364,690,815 g370,700,770 g376,678,740 r385,688,735 r391,696,765 r403,724,812 g412,704,775 g418,682,735 g424,660,700 r433,684,704 r439,684,708 g445,684,725 r451,630,704 g460,605,704 g466,558,622 g472,570,605 r478,580,606 g487,462,605 g493,416,542 r499,390,460 r505,370,500 r514,420,440 r520,420,465 r526,465,534 g535,440,540 r541,435,490 g547,478,505 g553,490,524 r562,498,524 r568,500,540 r574,498,594 g580,522,578 g589,520,552 g595,506,542 r601,510,525 r610,520,540 r616,524,590 r622,540,596 g628,498,596 g637,478,520 g643,456,495 g649,442,468 g655,446,465 r664,428,522 g670,470,508 g676,455,490 g685,432,465 g691,388,442 g697,300,412 r703,324,402 r712,385,460 r718,460,486 r724,470,495 r730,475,495 r739,435,592 g745,503,620 g751,530,560 g757,538,565 r766,565,598 r772,580,612 g778,558,605 g787,514,572 g793,486,545 g799,478,510 g805,474,500 r814,486,512 g820,475,505 g826,470,500 r832,398,525 g841,445,520 r847,442,490 r853,470,525 g862,500,530 g868,454,515 g874,420,472 g880,388,450 g886,362,405 g895,348,385 r901,345,385 g907,320,402 r916,348,486 r922,368,404 g928,390,450 r934,420,455 r943,450,490 r949,475,576 g955,430,542 g961,410,460 g967,405,432 g976,385,435 r982,380,405 r991,398,468 r1003,432,450 r1010,432,450 r1018,440,470 r1024,442,460 r1030,445,584 r1036,470,492 r1042,488,510 r1051,500,530 r1060,510,538 r1066,510,538 r1072,512,618 g1078,500,582 g1087,475,522 g1093,456,500 g1099,440,475 g1108,428,460 g1114,402,450 g1120,382,440 r1126,378,410 r1132,380,405 r1141,386,415 r1147,388,420 r1153,400,512 r1159,495,640 g1168,618,665 r1174,612,638 g1180,612,634 g1195,550,620 g1201,452,584 r1207,436,502 g1213,475,512 r1222,476,500 g1228,478,510 r1234,468,538 g1243,480,588 r1249,465,528 r1255,500,530 r1261,524,552 g1270,484,540 g1276,470,508 g1282,438,500 r1291,442,545 r1297,546,608 r1309,512,600 r1318,572,645 g1324,590,692 g1330,550,625 g1336,514,570 r1345,510,535 g1351,500,532 r1357,505,535 g1363,452,532 g1372,365,450 g1378,320,380 g1384,320,345 r1393,335,350 g1399,310,350 r1405,325,352 r1411,320,350 r1420,325,355 g1453,260,290',
        boxes: [['y', 424, 385, 1364, 619], ['y', 124, 667, 425, 824], ['c', 902, 319, 1393, 380], ['c', 1351, 511, 1393, 535], ['c', 1309, 602, 1393, 692], ['c', 0, 812, 1711, 884]],
        ovals: [['r2', 1203, 762, 160, 45]],
        lines: [[1318, 1867, 258, YEL, 2, 1], [610, 1403, 300, YEL, 2, 1], [868, 1403, 315, YEL, 2, 1], [1255, 1410, 435, YEL, 2, 1], [1255, 1390, 691, YEL, 1, 1], [290, 2787, 694, '#e00', 1, 1], [12, 2787, 750, RED, 2], [12, 2787, 791, RED, 1], [12, 2787, 1038, LIME, 2]],
        measure: [1186, 265, 1243, 1002, 1374, 949, 1433, '-1 264,4, -8,1 %, Bougies :54', RED],
        note: [14, 711, '-125,28 / -0,83 %']
      },
      {
        x0: 481,
        bars: 'r4,330,388 r13,345,405 g19,380,408 r25,385,408 r31,398,408 g40,330,408 g46,325,365 r52,325,340 r73,325,338 r79,330,392 g85,330,392 r94,325,392 r100,390,420 r106,450,480 r115,458,510 g121,460,566 r127,425,558 r133,465,594 r142,545,590 g148,420,600 g154,432,510 r160,432,506 r169,456,885 r175,762,894 r181,765,858 r190,815,845 g196,785,836 r202,778,876 g208,725,850 g217,598,790 r223,610,704 r229,620,646 g235,615,646 r244,608,656 r250,614,1035 r256,910,998 g262,885,1035 r271,890,920 g277,813,910 g283,815,902 r292,818,998 g298,795,1074 g304,758,852 r310,755,784 r319,780,810 g325,760,796 r331,688,870 r337,832,1044 g346,938,1015 r352,968,994 g358,902,972 r367,855,1005 r373,988,1186 g379,894,1225 g385,822,952 g394,816,892 g400,806,844 g406,766,822 g412,720,806 g421,645,770 r427,612,674 g433,608,672 g439,604,628 g448,602,632 r454,605,670 g460,576,680 r469,580,634 r475,574,750 g481,708,748 g487,665,732 g496,644,684 r502,630,750 g508,618,712 r514,620,795 g523,690,748 g529,695,736 g535,666,714 r544,682,957 g550,830,957 g556,782,876 r562,786,790',
        lines: [[235, 528, 1227, YEL, 2, 1]],
        labels: [[-46, 295, '15 651,38'], [-51, 311, '15 632,69'], [-44, 431, '15 478,09'], [-65, 689, '15 144,67'], [417, 254, '15 706,19'], [528, 1223, '14 456,39']],
        overlay: [['c', -104, 421, 85, 454]],
        fibs: [[618, RED, [[261, '0,00', 1], [489, '23,60'], [630, '38,20'], [744, '50,00'], [858, '61,80'], [1023, '78,60'], [1230, '100,00', 1]]], [678, GREEN, [[258, '0,00', 1], [630, '23,60'], [861, '38,20'], [1047, '50,00'], [1233, '61,80']]]],
        edge: 1332, home: [571, 84],
        arrow: '184,170 202,158 234,206 248,196 243,243 197,232 215,220'
      }
    ],
    ticks: [[107, '15 900,00'], [341, '15 600,00'], [572, '15 300,00'], [805, '15 000,00'], [1038, '14 700,00'], [1269, '14 400,00']],
    tags: [[255, '15 707,89', GREEN], [485, '15 409,44', RED], [626, '15 225,85', GREEN], [742, '15 078,64', RED], [692, '15 145,41', '#f00', 'wide'], [855, '14 930,76', RED], [857, '14 927,63', GREEN], [1018, '14 719,42', RED], [1043, '14 686,84', GREEN], [1031, '14 697,51', '#fff', 'plain'], [1225, '14 449,40', RED], [1228, '14 445,59', GREEN], [787, '15 020,13', CUR, 'now']]
  }
];

const px = v => Math.round(v / U);
const cell = v => Math.floor(v / U);
const text = (x, y, s, fill, cls = '') => `<text x="${x}" y="${y}" fill="${fill}"${cls ? ` class="${cls}"` : ''}>${s}</text>`;

const zones = {
  y: ['#ffe100', '.17', '#ffe92b'], c: ['#00c8ff', '.1', '#1fdcff'], p: ['#f0f', '.09', '#f0f'],
  g: ['#0c0', '.2', '#8fef8f'], r: ['#f22', '.25', '#f08080'], r2: ['#f22', '.12', '#f5a0a0']
};

function hline(x1, x2, y, color, w, dotted, dx, dy) {
  const yy = (w === 1 ? cell(y) + 0.5 : px(y)) + dy;
  return `<path d="M${px(x1) + dx} ${yy}H${px(x2) + dx}" stroke="${color}" stroke-width="${w}"${dotted ? ' stroke-dasharray="2 2"' : ''}/>`;
}

function zone([kind, x1, y1, x2, y2], dx, dy) {
  const [fill, op, line] = zones[kind];
  return `<rect x="${cell(x1) + dx + 0.5}" y="${cell(y1) + dy + 0.5}" width="${px(x2 - x1)}" height="${px(y2 - y1)}" fill="${fill}" fill-opacity="${op}" stroke="${line}" stroke-dasharray="7 4"/>`;
}

function drawBlock(b, dy) {
  const dx = b.x0;
  let base = '', over = '';
  for (const item of b.bars.split(' ')) {
    const up = item[0] === 'g';
    const [x, hi, lo, top, bottom] = item.slice(1).split(',').map(Number);
    const color = up ? '#00ab0b' : '#f00000';
    const cx = cell(x) + dx;
    base += `<path d="M${cx + 0.5} ${px(hi) + dy}V${px(lo) + dy}" stroke="${color}"/>`;
    if (top) base += `<rect x="${cx - 1}" y="${px(top) + dy}" width="${up ? 3 : 2}" height="${Math.max(1, px(bottom - top))}" fill="${color}"/>`;
  }
  for (const z of b.boxes || []) base += zone(z, dx, dy);
  for (const [k, x, y, rx, ry] of b.ovals || []) {
    const [fill, op, line] = zones[k];
    base += `<ellipse cx="${px(x) + dx}" cy="${px(y) + dy}" rx="${px(rx)}" ry="${px(ry)}" fill="${fill}" fill-opacity="${op}" stroke="${line}" stroke-dasharray="2 2"/>`;
  }
  for (const [x, y, s] of b.labels || []) {
    over += `<rect x="${px(x) + dx}" y="${px(y) - 7 + dy}" width="${s.length > 8 ? 56 : 49}" height="15" rx="2" fill="${YEL}"/>` + text(px(x) + 1 + dx, px(y) + 5 + dy, s, '#222');
  }
  for (const l of b.lines || []) {
    const s = hline(l[0], l[1], l[2], l[3], l[4], l[5], dx, dy);
    if (l[3] === YEL) base += s; else over += s;
  }
  for (const z of b.overlay || []) over += zone(z, dx, dy);
  for (const [x, color, rows] of b.fibs || []) {
    for (const [y, s, solid] of rows) {
      over += text(px(x) + 3 + dx, px(y) - 5 + dy, `(${s} %)`, color === RED ? '#ff3b3b' : color === BLACK ? '#333' : color);
      over += hline(x, b.edge, y, color, 2, !solid, dx, dy);
    }
  }
  if (b.note) over += text(px(b.note[0]) + dx, px(b.note[1]) + dy, b.note[2], RED);
  if (b.measure) {
    const [x, y1, y2, c1, c2, b1, b2, s, color] = b.measure;
    const cx = cell(x) + dx + 0.5, t = cell(y1) + dy + 0.5, d = cell(y2) + dy + 0.5;
    over += `<path d="M${cx} ${t}V${d}M${px(c1) + dx} ${t}H${px(c2) + dx}M${px(c1) + dx} ${d}H${px(c2) + dx}" stroke="${color}"/>`;
    over += `<path d="M${cx - 4} ${t + 7}L${cx} ${t}L${cx + 4} ${t + 7}M${cx - 4} ${d - 7}L${cx} ${d}L${cx + 4} ${d - 7}" fill="none" stroke="${color}" shape-rendering="auto"/>`;
    over += `<rect x="${cell(b1) + dx + 0.5}" y="${d + 4}" width="${px(b2 - b1)}" height="16" fill="#fff" stroke="${color}"/>` + text(px(b1) + 5 + dx, d + 17.5, s, color);
  }
  if (b.trend) {
    const [x1, y1, x2, y2] = b.trend;
    over += `<path d="M${px(x1) + dx} ${px(y1) + dy}L${px(x2) + dx} ${px(y2) + dy}" stroke="#333" stroke-width="2" stroke-dasharray="5 5" shape-rendering="auto"/>`;
  }
  if (b.arrow) {
    const pts = b.arrow.split(' ').map(p => { const [x, y] = p.split(','); return `${x / U + dx},${y / U + dy}`; }).join(' ');
    over += `<polygon points="${pts}" fill="${RED}" shape-rendering="auto"/>`;
  }
  if (b.home) {
    const x = px(b.home[0]) + dx, y = px(b.home[1]) + dy;
    over += `<path d="M${x - 6} ${y + 12}V${y + 5}L${x} ${y}L${x + 6} ${y + 5}V${y + 12}Z" fill="#bbb" stroke="#444" shape-rendering="auto"/>`;
  }
  return [base, over];
}

function drawPlot(c) {
  const parts = c.blocks.map(b => drawBlock(b, c.dy));
  return parts.map(p => p[0]).join('') + parts.map(p => p[1]).join('');
}

function drawAxis(c) {
  let s = '<path d="M1 0V2000" stroke="#dcdcdc" stroke-width="2"/>';
  for (const [y, t] of c.ticks) s += text(8, px(y) + 5 + c.dy, t, '#222');
  for (const [y, t, color, kind] of c.tags) {
    const cy = px(y) + c.dy, w = t.length > 8 ? 56 : 49;
    if (kind === 'now') s += `<rect x="1" y="${cy - 11}" width="74" height="22" rx="2" fill="${color}"/>` + text(3, cy + 5, t, '#fff', 'now');
    else if (kind === 'wide') s += `<rect x="1" y="${cy - 8}" width="74" height="17" fill="${color}"/>` + text(8, cy + 5, t, '#fff', 'strong');
    else if (kind === 'plain') s += `<rect x="3.5" y="${cy - 7.5}" width="${w}" height="15" fill="#fff" stroke="#000"/>` + text(4, cy + 5, t, '#333');
    else s += `<rect x="3" y="${cy - 7}" width="${w}" height="15" rx="2" fill="${color}"/>` + text(4, cy + 5, t, '#fff', 'strong');
  }
  return s;
}

function drawTimes(c) {
  const [x, w, s] = c.stamp;
  return c.times.map(t => text(t[0], 11, t[1], '#111')).join('') + `<rect x="${x}" y="0" width="${w}" height="13" fill="#000"/>` + text(x + 2, 9, s, '#fff', 'strong');
}

const icon = (id, w = 14, h = w) => `<svg width="${w}" height="${h}"><use href="#i-${id}"/></svg>`;
const btn = (cls, body, label) => `<button class="${cls}"${label ? ` aria-label="${label}"` : ''}>${body}</button>`;

document.getElementById('panels').innerHTML = charts.map(c => `
<section class="panel">
  <div class="tabs">
    ${btn('tabs-menu', icon('menu', 12), 'Menu')}
    <div class="tab"><i>2</i><strong>${c.name}</strong>${icon('search', 15)}</div>
    ${btn('tab-add', icon('plus', 10), 'Nouvel onglet')}
    <div class="move"><b>▲</b> 0 %<br>0</div>
    <div class="quote">${btn('sell', c.sell)}${btn('buy', c.buy)}<span class="spread">${c.spread}</span></div>
    <div class="depth${c.float ? ' hot' : ''}"></div>
    ${btn('win', icon('expand', 10), 'Agrandir')}${btn('win', icon('popout', 10), 'Détacher')}${btn('win', icon('close', 10), 'Fermer')}
  </div>
  <div class="tools">
    ${btn('icon', icon('list'), 'Liste')}${btn('icon', icon('grid', 16), 'Disposition')}
    ${btn('period', '4 heures')}${btn('quick', '5m')}${btn('quick wide', '15m')}${btn('quick wide', '30m')}
    ${btn('span', c.span)}${btn('quick wide', 'SLS')}${btn('quick', '3J')}${btn('quick', '1S')}
    ${btn('model', icon('sliders') + 'Modèles')}${btn('quick', '1')}${btn('side-btn', icon('candles') + 'Vente')}${btn('link', icon('eye', 14, 12) + 'Lié')}
    ${btn('prefs', icon('gear') + c.prefs, 'Paramètres')}
  </div>
  <svg class="times">${drawTimes(c)}</svg>
  <div class="chart">
    <svg class="plot" shape-rendering="crispEdges">${drawPlot(c)}</svg>
    <svg class="axis">${drawAxis(c)}</svg>
    ${c.float ? `<div class="float">${btn('', icon('cog', 16), 'Réglages')}${btn('', icon('copy'), 'Copier')}${btn('', icon('trash', 12, 14), 'Supprimer')}</div>` : ''}
  </div>
  <div class="foot">
    ${btn('mini', icon('refresh'), 'Rafraîchir')}${btn('mini', icon('forbid'), 'Effacer')}${btn('mini on', icon('pencil'), 'Dessiner')}${btn('mini on', icon('updown', 12), 'Ordres')}
    <span class="gap"></span>
    ${btn('fav', 'Favoris' + icon('star', 13))}${btn('', 'Période')}${btn('', 'Outils De Dessin')}${btn('', 'Indicateurs')}${btn('', 'Figures')}
    <span class="gap"></span>
    ${btn('mini', icon('fit'), 'Ajuster')}${btn('mini', icon('minus', 10), 'Réduire')}${btn('mini', icon('plus', 10), 'Augmenter')}${btn('mini on', icon('cross'), 'Réticule')}${btn('mini on', icon('split'), 'Échelle')}
  </div>
</section>`).join('');
```
